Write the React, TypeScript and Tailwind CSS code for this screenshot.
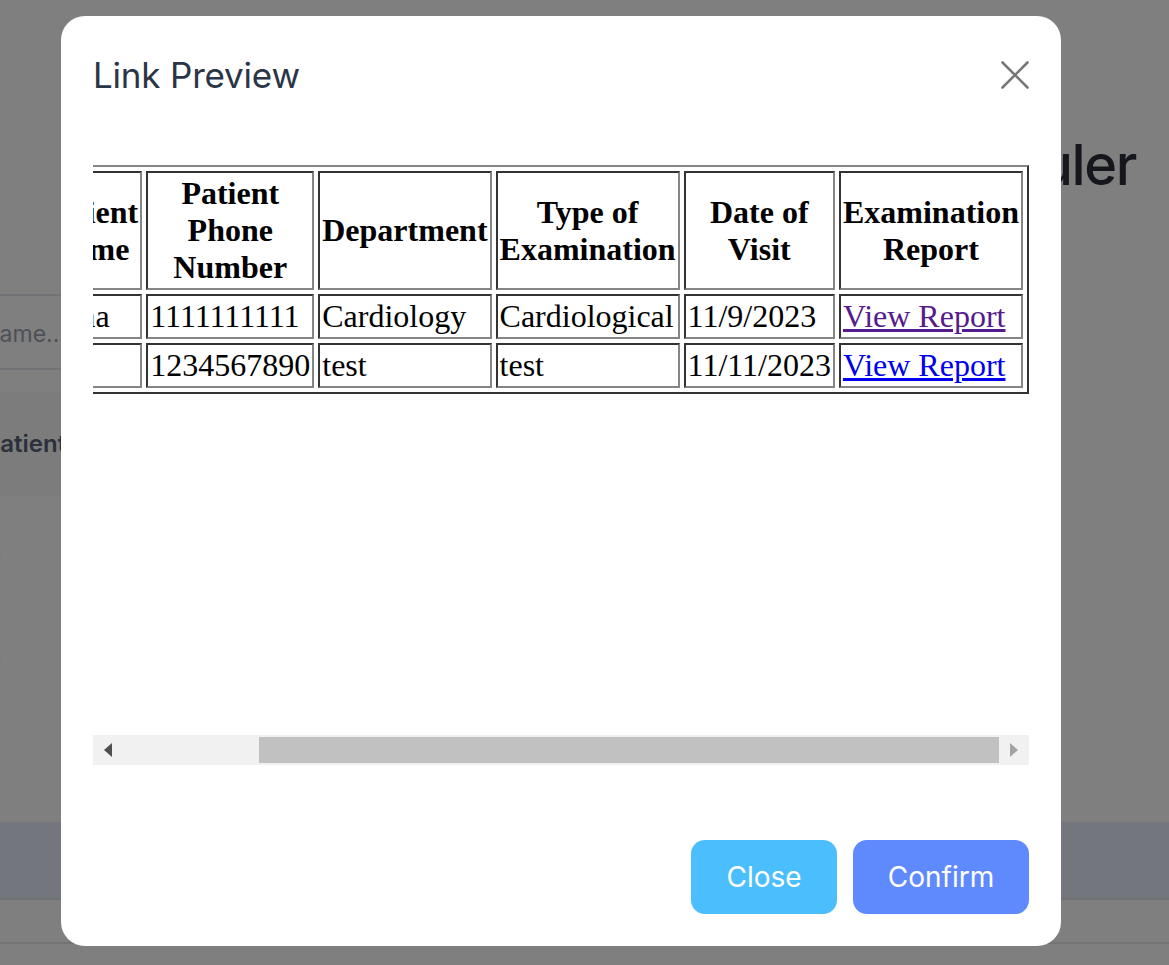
import React from "react";

const rows = [
  { name: "Anna", phone: "1111111111", dept: "Cardiology", type: "Cardiological", date: "11/9/2023", visited: true },
  { name: "test", phone: "1234567890", dept: "test", type: "test", date: "11/11/2023", visited: false },
];

const th =
  "border-2 border-t-[#333] border-l-[#333] border-r-[#858585] border-b-[#858585] p-[2px] font-bold text-center align-middle";
const td =
  "border-2 border-t-[#333] border-l-[#333] border-r-[#858585] border-b-[#858585] p-[2px] font-normal text-left align-middle whitespace-nowrap";

const PreviewTable = () => {
  return (
    <table className="w-min shrink-0 border-separate border-spacing-[4px] border-2 border-t-[#858585] border-l-[#858585] border-r-[#333] border-b-[#333] bg-white font-['Liberation_Serif','Times_New_Roman',serif] text-[32px] leading-[37px] text-black">
      <thead>
        <tr>
          <th className={th}>Patient Name</th>
          <th className={th}>Patient Phone Number</th>
          <th className={th}>Department</th>
          <th className={th}>Type of Examination</th>
          <th className={th}>Date of Visit</th>
          <th className={th}>Examination Report</th>
        </tr>
      </thead>
      <tbody>
        {rows.map((r) => (
          <tr key={r.phone}>
            <td className={td}>{r.name}</td>
            <td className={td}>{r.phone}</td>
            <td className={td}>{r.dept}</td>
            <td className={td}>{r.type}</td>
            <td className={td}>{r.date}</td>
            <td className={td}>
              <a href="#" className={r.visited ? "text-[#551a8b] underline" : "text-[#0000ee] underline"}>
                View Report
              </a>
            </td>
          </tr>
        ))}
      </tbody>
    </table>
  );
};

const ScrollBar = () => {
  return (
    <div className="flex h-[30px] w-full bg-[#f1f1f1]">
      <div className="flex w-[30px] items-center justify-center">
        <svg width="8" height="14" viewBox="0 0 8 14">
          <polygon points="8,0 8,14 0,7" fill="#505050" />
        </svg>
      </div>
      <div className="flex flex-1 justify-end py-[2px]">
        <div className="h-full w-[740px] bg-[#c1c1c1]" />
      </div>
      <div className="flex w-[30px] items-center justify-center">
        <svg width="8" height="14" viewBox="0 0 8 14">
          <polygon points="0,0 0,14 8,7" fill="#a3a3a3" />
        </svg>
      </div>
    </div>
  );
};

const LinkPreviewModal = () => {
  return (
    <div className="flex h-[930px] w-[1000px] flex-col rounded-[24px] bg-white px-8 pt-[39px] pb-8 font-['Inter',sans-serif]">
      <div className="flex h-10 items-center justify-between">
        <h2 className="text-[35px] leading-10 font-normal tracking-[-0.2px] text-[#2a3547]">Link Preview</h2>
        <button className="flex h-7 w-7 items-center justify-center">
          <svg width="28" height="28" viewBox="0 0 28 28" fill="none">
            <path d="M1.5 1.5L26.5 26.5M26.5 1.5L1.5 26.5" stroke="#777" strokeWidth="2.6" strokeLinecap="round" />
          </svg>
        </button>
      </div>
      <div className="mt-[70px] flex h-[570px] items-start justify-end overflow-hidden">
        <PreviewTable />
      </div>
      <ScrollBar />
      <div className="mt-[75px] flex justify-end gap-4">
        <button className="h-[74px] w-[146px] rounded-[14px] bg-[#4bbffd] text-[28px] text-white">Close</button>
        <button className="h-[74px] w-[176px] rounded-[14px] bg-[#5f8afe] text-[28px] text-white">Confirm</button>
      </div>
    </div>
  );
};

export default function App() {
  return (
    <div className="relative h-[965px] w-full overflow-hidden bg-white font-['Inter',sans-serif]">
      <div className="flex h-[193px] items-end justify-end pr-[33px]">
        <h1 className="text-[56px] leading-[56px] font-medium tracking-tight text-[#2b2f3a]">Patient Scheduler</h1>
      </div>
      <div className="mt-[101px] w-[420px]">
        <div className="flex h-[76px] items-center overflow-hidden border-y-2 border-[#e2e5ea] pt-[4px] text-[23px] text-[#9aa2ae]">
          <span className="-ml-[14px] whitespace-nowrap">name...</span>
        </div>
        <div className="mt-[22px] flex h-[104px] items-center overflow-hidden bg-[#f8f9fb] text-[24px] font-semibold text-[#566175]">
          <span className="-ml-[15px] whitespace-nowrap">Patient Name</span>
        </div>
        <div className="flex h-[107px] items-center overflow-hidden text-[24px] text-[#374151]">
          <span className="-ml-[12px]">a</span>
        </div>
        <div className="flex h-[107px] items-center overflow-hidden text-[24px] text-[#374151]">
          <span className="-ml-[12px]">a</span>
        </div>
      </div>
      <div className="mt-[112px] h-[78px] border-b-2 border-[#dfe2e8] bg-[#e6ecf8]" />
      <div className="h-[44px] border-b-2 border-[#e4e6ea]" />
      <div className="absolute inset-0 bg-black/50 pt-4 pl-[61px]">
        <LinkPreviewModal />
      </div>
    </div>
  );
}
